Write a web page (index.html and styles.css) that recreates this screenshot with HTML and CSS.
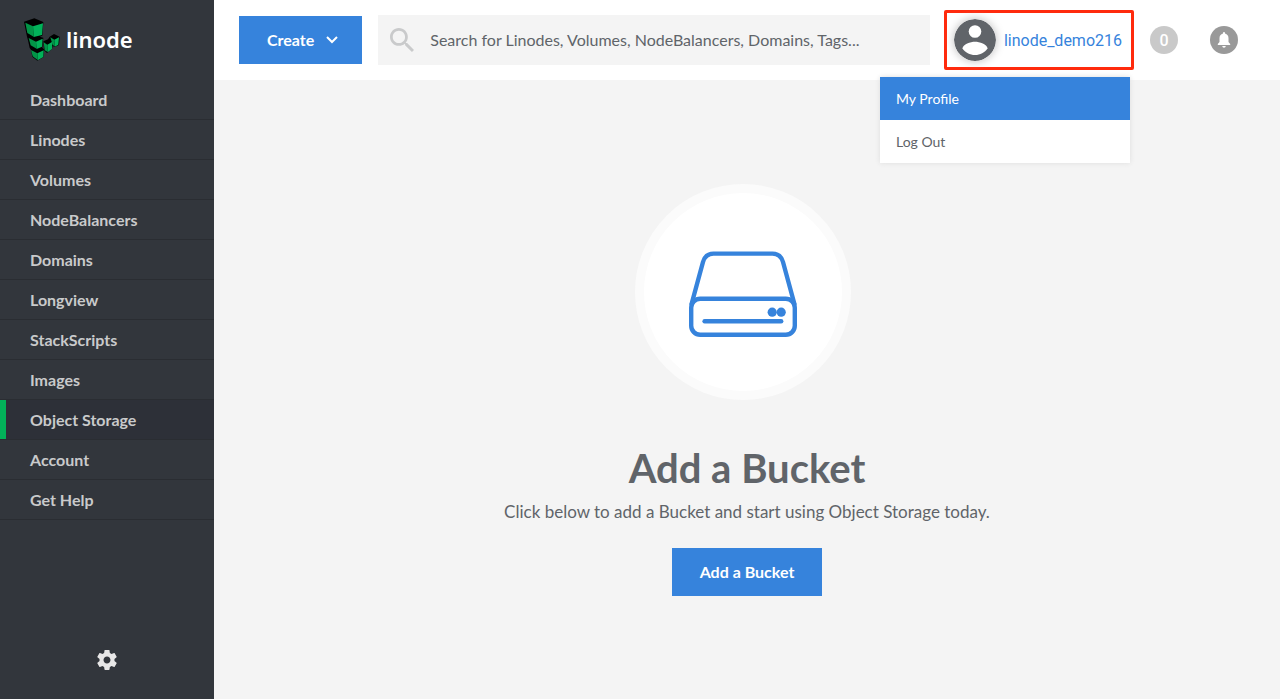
FILE: index.html
```html
<!DOCTYPE html>
<html lang="en">
<head>
<meta charset="utf-8">
<meta name="viewport" content="width=device-width, initial-scale=1">
<title>Object Storage | Linode</title>
<link rel="stylesheet" href="styles.css">
</head>
<body>
<div class="app">
  <aside class="sidebar">
    <a class="logo" href="#" aria-label="Linode home">
      <svg class="logo-mark" viewBox="71 53 108 129" aria-hidden="true">
        <path d="M71 64 102 54l27 11-3 41-8 3 11 3-3 30 5 5-1 23-19 11-15-12-4-21-4-5-5-23-3-11zM129 123l14-6 5-8 13-8 17 8-2 25-13 6-6-3-2 9-15 12-9-8z" fill="#000"/>
        <path d="M75 67l23 11 2 31-19-11zM85 113l22 11 2 21-18-10zM92 149l19 10 1 20-15-11zM130 126l11 7 1 22-9-5zM150 111l12 7 1 20-6-4z" fill="#029447"/>
        <path d="M98 78l30-9-3 35-25 6zM107 124l20-9-2 24-16 7zM111 159l19-9-1 20-17 10zM141 133l15-9-1 22-13 10zM162 118l14-7-2 22-11 6z" fill="#02b159"/>
      </svg>
      <span class="logo-name">linode</span>
    </a>
    <nav class="nav" aria-label="Main">
      <a href="#">Dashboard</a>
      <a href="#">Linodes</a>
      <a href="#">Volumes</a>
      <a href="#">NodeBalancers</a>
      <a href="#">Domains</a>
      <a href="#">Longview</a>
      <a href="#">StackScripts</a>
      <a href="#">Images</a>
      <a class="active" href="#" aria-current="page">Object Storage</a>
      <a href="#">Account</a>
      <a href="#">Get Help</a>
    </nav>
    <button class="settings" type="button" aria-label="Settings">
      <svg viewBox="0 0 24 24" width="24" height="24" aria-hidden="true"><path fill="#e7e7e7" d="M19.43 12.98c.04-.32.07-.64.07-.98s-.03-.66-.07-.98l2.11-1.65c.19-.15.24-.42.12-.64l-2-3.46c-.12-.22-.39-.3-.61-.22l-2.49 1c-.52-.4-1.08-.73-1.69-.98l-.38-2.65C14.46 2.18 14.25 2 14 2h-4c-.25 0-.46.18-.49.42l-.38 2.65c-.61.25-1.17.59-1.69.98l-2.49-1c-.23-.09-.49 0-.61.22l-2 3.46c-.13.22-.07.49.12.64l2.11 1.65c-.04.32-.07.65-.07.98s.03.66.07.98l-2.11 1.65c-.19.15-.24.42-.12.64l2 3.46c.12.22.39.3.61.22l2.49-1c.52.4 1.08.73 1.69.98l.38 2.65c.03.24.24.42.49.42h4c.25 0 .46-.18.49-.42l.38-2.65c.61-.25 1.17-.59 1.69-.98l2.49 1c.23.09.49 0 .61-.22l2-3.46c.12-.22.07-.49-.12-.64zM12 15.5c-1.93 0-3.5-1.57-3.5-3.5s1.57-3.5 3.5-3.5 3.5 1.57 3.5 3.5-1.57 3.5-3.5 3.5z"/></svg>
    </button>
  </aside>

  <div class="page">
    <header class="topbar">
      <button class="button create" type="button">Create
        <svg viewBox="0 0 12 8" width="12" height="8" aria-hidden="true"><path d="M1 1l5 5 5-5" fill="none" stroke="#fff" stroke-width="2"/></svg>
      </button>
      <label class="search">
        <svg viewBox="3 3 17.5 17.5" width="24" height="24" aria-hidden="true"><path fill="#c9cacb" d="M15.5 14h-.79l-.28-.27C15.41 12.59 16 11.11 16 9.500 16 5.910 13.090 3 9.500 3S3 5.910 3 9.500 5.910 16 9.500 16c1.610 0 3.090-.59 4.230-1.570l.27.28v.79l5 4.990L20.490 19l-4.990-5zm-6 0C7.010 14 5 11.990 5 9.500S7.010 5 9.500 5 14 7.010 14 9.500 11.990 14 9.500 14z"/></svg>
        <input type="search" aria-label="Search" placeholder="Search for Linodes, Volumes, NodeBalancers, Domains, Tags...">
      </label>
      <div class="account">
        <button class="user" type="button" aria-haspopup="menu" aria-expanded="true">
          <svg class="avatar" viewBox="0 0 42 42" width="42" height="42" aria-hidden="true"><circle cx="21" cy="21" r="21" fill="#606469"/><circle cx="21" cy="12.500" r="6.300" fill="#fff"/><path fill="#fff" d="M8.500 29.500c0-4.200 8.300-6.700 12.500-6.700s12.500 2.500 12.500 6.700c-2.700 4-7.300 6.500-12.500 6.500s-9.800-2.500-12.500-6.500z"/></svg>
          <span>linode_demo216</span>
        </button>
        <div class="menu" role="menu">
          <a class="selected" role="menuitem" href="#">My Profile</a>
          <a role="menuitem" href="#">Log Out</a>
        </div>
      </div>
      <div class="alerts">
        <button class="round" type="button" aria-label="Notifications: 0">0</button>
        <button class="round events" type="button" aria-label="Events">
          <svg viewBox="0 0 14 16" width="14" height="16" aria-hidden="true"><path fill="#fff" d="M7 0c.8 0 1 .5 1 1.600 2.300.6 3.500 2.300 3.500 4.700v3.600L13.200 12v1H.8v-1l1.700-2.100V6.300C2.500 3.900 3.700 2.200 6 1.600 6 .5 6.200 0 7 0zM5.300 14h3.400c0 1-.7 1.700-1.700 1.700S5.300 15 5.300 14z"/></svg>
        </button>
      </div>
    </header>

    <main class="empty">
      <div class="illustration">
        <svg viewBox="0 0 108 90" width="108" height="90" fill="none" stroke="#3683dc" stroke-width="4.400" aria-hidden="true">
          <g transform="translate(0 4)">
            <rect x="2.200" y="47.700" width="103.600" height="36.100" rx="9"/>
            <path d="M2.300 54 14 11C15.600 5.500 19 2.600 24.500 2.600h59C89 2.600 92.400 5.500 94 11l11.700 43"/>
            <path d="M15.600 70.200h76.600" stroke-linecap="round"/>
            <circle cx="83.200" cy="61.200" r="4.600" fill="#3683dc" stroke="none"/>
            <circle cx="92.200" cy="61.200" r="4.600" fill="#3683dc" stroke="none"/>
          </g>
        </svg>
      </div>
      <h1>Add a Bucket</h1>
      <p>Click below to add a Bucket and start using Object Storage today.</p>
      <button class="button" type="button">Add a Bucket</button>
    </main>
  </div>
</div>
</body>
</html>
```

FILE: styles.css
```css
* { box-sizing: border-box; }

body {
  margin: 0;
  background: #f4f4f4;
  color: #606469;
  font-family: Lato, "Liberation Sans", sans-serif;
  font-size: 16px;
}

a { color: inherit; text-decoration: none; }

button {
  border: 0;
  padding: 0;
  background: none;
  color: inherit;
  font: inherit;
  cursor: pointer;
}

svg { display: block; flex: none; }

.app { display: flex; min-height: 100vh; }

/* Sidebar */
.sidebar {
  display: flex;
  flex-direction: column;
  flex: none;
  width: 214px;
  padding-bottom: 27px;
  background: #32363c;
}

.logo {
  display: flex;
  align-items: center;
  gap: 6px;
  height: 80px;
  padding: 0 0 2px 24px;
  color: #fff;
}

.logo-mark { width: 36px; height: 43px; }

.logo-name {
  font-family: "Noto Sans", "Open Sans", sans-serif;
  font-size: 22px;
  font-weight: 600;
}

.nav { display: flex; flex-direction: column; }

.nav a {
  height: 40px;
  padding-left: 30px;
  border-bottom: 1px solid #2a2d32;
  color: #c9cacb;
  font-weight: 700;
  line-height: 40px;
}

.nav .active {
  background: #2d3038;
  box-shadow: inset 6px 0 #02b159;
}

.settings { align-self: center; margin-top: auto; }

/* Top bar */
.page { display: flex; flex: 1; flex-direction: column; min-width: 0; }

.topbar {
  display: flex;
  align-items: center;
  height: 80px;
  padding: 0 42px 0 25px;
  background: #fff;
}

.button {
  height: 48px;
  padding: 0 28px 2px;
  background: #3683dc;
  color: #fff;
  font-weight: 700;
}

.create {
  display: flex;
  align-items: center;
  gap: 12px;
  padding: 0 24px 1px 28px;
}

.search {
  display: flex;
  flex: 1;
  align-items: center;
  gap: 16px;
  height: 50px;
  min-width: 0;
  margin: 0 14px 0 16px;
  padding: 0 12px;
  background: #f4f4f4;
}

.search input {
  flex: 1;
  min-width: 0;
  padding: 0 0 2px;
  border: 0;
  outline: 0;
  background: none;
  font: inherit;
}

.search input::placeholder { color: #606469; opacity: 1; }

.account { position: relative; }

.user {
  display: flex;
  align-items: center;
  gap: 8px;
  height: 60px;
  padding: 0 9px 0 7px;
  border: 3px solid #ff2a0d;
  border-radius: 2px;
  color: #3683dc;
  font-family: Roboto, sans-serif;
}

.avatar {
  border-radius: 50%;
  box-shadow: 0 0 10px #bbb;
}

.menu {
  position: absolute;
  top: 67px;
  right: 4px;
  width: 250px;
  background: #fff;
  box-shadow: 0 0 5px #ddd;
  font-size: 14px;
}

.menu a {
  display: block;
  padding: 0 16px;
  line-height: 43px;
}

.menu .selected { background: #3683dc; color: #fff; }

.alerts { display: flex; gap: 32px; margin-left: 16px; }

.round {
  display: grid;
  place-items: center;
  width: 28px;
  height: 28px;
  border-radius: 50%;
  background: #c9c9c9;
  color: #fff;
  font-family: Roboto, sans-serif;
  font-weight: 500;
}

.events { background: #999; }

/* Empty state */
.empty {
  display: flex;
  flex-direction: column;
  align-items: center;
  padding: 104px 24px 24px;
  text-align: center;
}

.illustration {
  display: grid;
  place-items: center;
  width: 216px;
  height: 216px;
  margin-right: 8px;
  border: 9px solid #fbfbfb;
  border-radius: 50%;
  background: #fff;
}

.empty h1 {
  margin: 44px 0 0;
  font-size: 40px;
  line-height: 48px;
}

.empty p {
  margin: 8px 0 24px;
  font-size: 17px;
  line-height: 24px;
}
```
